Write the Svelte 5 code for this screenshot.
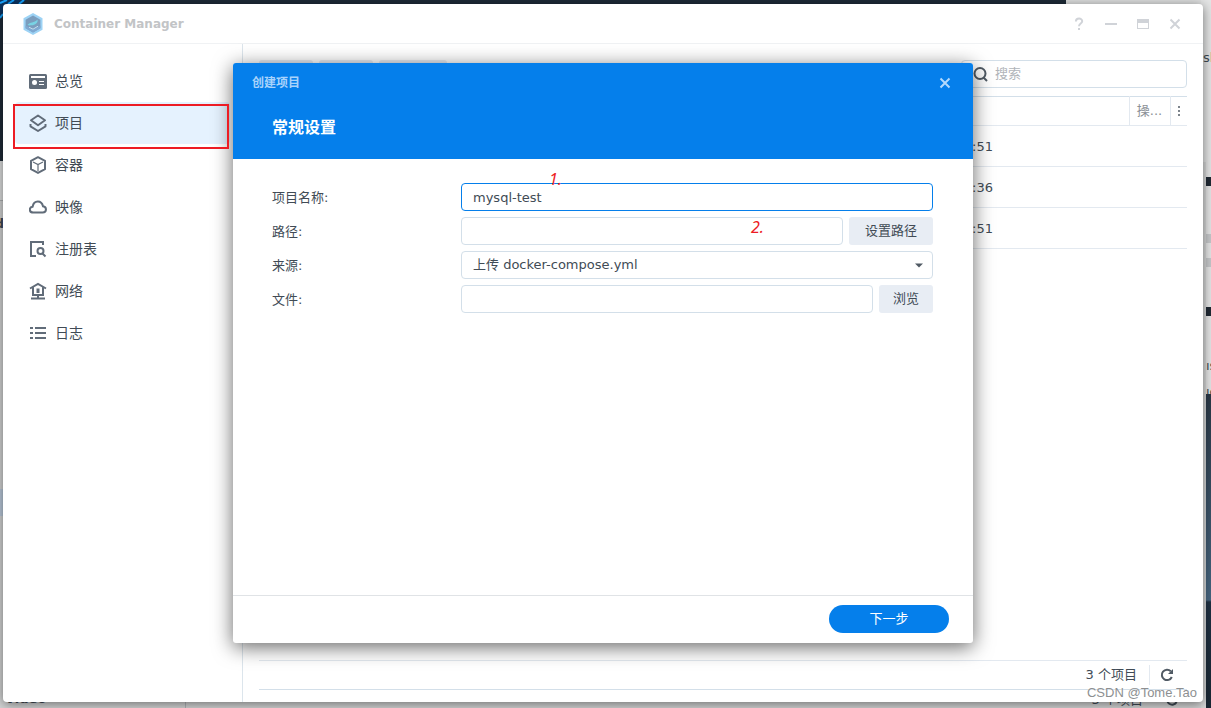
<script>
  const nav = [
    { id: 'overview', label: '总览' },
    { id: 'project', label: '项目' },
    { id: 'container', label: '容器' },
    { id: 'image', label: '映像' },
    { id: 'registry', label: '注册表' },
    { id: 'network', label: '网络' },
    { id: 'log', label: '日志' }
  ];
  const rows = [':51', ':36', ':51'];
  let name = $state('mysql-test');
  let path = $state('');
  let source = $state('上传 docker-compose.yml');
  let file = $state('');
</script>

<div class="desktop">
  <div class="wallpaper" aria-hidden="true">
    <svg class="corner" width="26" height="20" viewBox="0 0 26 20">
      <path d="M0 0H26L22 4L3 16L0 19Z" fill="#0b3563" />
      <path d="M0 3L7 0M0 18L3 14M8 4L14 0M19 4L24 0" stroke="#18a5ff" stroke-width="2" fill="none" />
    </svg>
    <div class="back-left"><span>d</span><i></i></div>
    <div class="back-bottom"><span class="clip-video">Video</span><i></i><span class="clip-count">3 个项目</span>
      <svg width="14" height="14" viewBox="0 0 14 14"><path d="M11.6 9A5 5 0 1 1 11 3.5" fill="none" stroke="#414b55" stroke-width="2" /><path d="M13 1V6H8Z" fill="#414b55" /></svg>
    </div>
    <div class="back-right">
      <span class="frag top">sl</span>
      <i class="band one"></i><i class="band two"></i><i class="band three"></i><i class="band four"></i>
      <span class="frag mid">ıs</span>
      <span class="frag low">ıc</span>
      <i class="edge"></i>
    </div>
  </div>

  <main class="window">
    <header class="titlebar">
      <svg class="logo" width="22" height="24" viewBox="0 0 22 24">
        <path d="M11 1L20.500 6.300V17.700L11 23L1.500 17.700V6.300Z" fill="#9dd3f5" />
        <path d="M11 3.500L18.400 7.700V16.300L11 20.500L3.600 16.300V7.700Z" fill="#7b9dbd" />
        <path d="M11 20.500L3.600 16.300V13.500L11 17.500L18.400 13.500V16.300Z" fill="#7fa9d2" />
        <path d="M5.500 13C8 9.500 12 11.500 15.500 7.500C16.500 10.500 13 13.200 9.500 13.300C8 13.400 6.500 13.500 5.500 13Z" fill="#79d3e4" />
        <path d="M7 15.200L11 17.200L16 14.200" fill="none" stroke="#c3dff0" stroke-width="1" />
      </svg>
      <h1>Container Manager</h1>
      <div class="win-controls">
        <button aria-label="帮助"><svg width="14" height="14" viewBox="0 0 14 14"><path d="M3.900 4.600C3.900 0.600 10.200 0.700 10.200 4.200C10.200 6.600 7 6.500 7 9.200M7 11V13" /></svg></button>
        <button aria-label="最小化"><svg width="14" height="14" viewBox="0 0 14 14"><path d="M1 7H13" /></svg></button>
        <button aria-label="最大化"><svg width="14" height="14" viewBox="0 0 14 14"><path d="M1 2H13V12H1ZM2 6V11H12V6Z" fill="#d0d3d8" fill-rule="evenodd" stroke="none" /></svg></button>
        <button aria-label="关闭"><svg width="14" height="14" viewBox="0 0 14 14"><path d="M2.500 2.500L11.500 11.500M11.500 2.500L2.500 11.500" /></svg></button>
      </div>
    </header>

    <div class="body">
      <nav>
        {#each nav as item (item.id)}
          <a href="#{item.id}" class:active={item.id === 'project'}>
            <svg width="18" height="18" viewBox="0 0 18 18" fill="none" stroke="#616c79" stroke-width="2">
              {#if item.id === 'overview'}
                <path d="M1.500 2H16.500Q18 2 18 3.500V15.500Q18 17 16.500 17H1.500Q0 17 0 15.500V3.500Q0 2 1.500 2Z" fill="#616c79" stroke="none" />
                <path d="M2 5H16" stroke="#fff" />
                <circle cx="5.500" cy="10.500" r="2.500" fill="#fff" stroke="none" />
                <path d="M10 9.500H15M10 12.500H15" stroke="#fff" stroke-width="1" />
              {:else if item.id === 'project'}
                <path d="M9 1.500L16 6.300L9 11.300L2 6.300Z" stroke-linejoin="round" />
                <path d="M1.500 10V12.300L9 17L16.500 12.300V10" stroke-linejoin="round" />
              {:else if item.id === 'container'}
                <path d="M9 1.200L16 4.800V13.200L9 16.900L2 13.200V4.800Z" stroke-linejoin="round" />
                <path d="M4 6L9 8.500L14 6M9 8.500V15" stroke-width="1.200" />
              {:else if item.id === 'image'}
                <path d="M4.300 14.500C-.200 14.500-.200 9.300 3.600 8.700C5 1.800 12.500 2 14 8.300C18 8.800 18 14.500 13.700 14.500Z" />
              {:else if item.id === 'registry'}
                <path d="M14 5V2H2V16H7" />
                <circle cx="11.500" cy="11" r="3" />
                <path d="M13.500 13.500L16.500 16.500" />
              {:else if item.id === 'network'}
                <path d="M1 6.500L9 2L17 6.500M4 5.500V13H14V5.500" />
                <path d="M2 16.500H16M9 13V16" />
                <path d="M9 6.500V11" stroke-width="3" />
              {:else}
                <path d="M1 4H4M1 9H4M1 14H4M6 4H17M6 9H17M6 14H17" />
              {/if}
            </svg>
            <span>{item.label}</span>
          </a>
        {/each}
        <div class="mark-box" aria-hidden="true"></div>
      </nav>

      <section class="content">
        <div class="toolbar">
          <i class="ghost"></i><i class="ghost"></i><i class="ghost wide"></i>
          <label class="search">
            <svg width="16" height="16" viewBox="0 0 16 16" fill="none" stroke="#505a64" stroke-width="2"><circle cx="8" cy="7.500" r="5.500" /><path d="M11.500 11.500L15 15" /></svg>
            <input type="search" placeholder="搜索" aria-label="搜索" />
          </label>
        </div>
        <table>
          <thead><tr><th></th><th class="op">操...</th><th class="more"><svg width="2" height="10" viewBox="0 0 2 10" role="img" aria-label="更多"><path d="M0 0H2V2H0ZM0 4H2V6H0ZM0 8H2V10H0Z" fill="#7d848c" /></svg></th></tr></thead>
          <tbody>
            {#each rows as row}
              <tr><td><span>{row}</span></td><td></td><td></td></tr>
            {/each}
          </tbody>
        </table>
        <footer class="pager">
          <span>3 个项目</span>
          <button aria-label="刷新"><svg width="14" height="14" viewBox="0 0 14 14"><path d="M11.800 9A5.200 5.200 0 1 1 10.800 3.300" fill="none" stroke="#505a64" stroke-width="2" /><path d="M13 1V6H8Z" fill="#505a64" /></svg></button>
        </footer>
      </section>
    </div>
  </main>

  <div class="dialog" role="dialog" aria-labelledby="dialog-title">
    <header>
      <div class="dialog-bar">
        <span id="dialog-title">创建项目</span>
        <button aria-label="关闭"><svg width="12" height="12" viewBox="0 0 12 12"><path d="M1.500 1.500L10.500 10.500M10.500 1.500L1.500 10.500" stroke="#b4d9fc" stroke-width="2" /></svg></button>
      </div>
      <h2>常规设置</h2>
    </header>
    <form>
      <div class="row">
        <label for="name">项目名称:</label>
        <div class="field"><input id="name" class="focused" bind:value={name} /><em class="mark first">1.</em></div>
      </div>
      <div class="row">
        <label for="path">路径:</label>
        <div class="field"><input id="path" bind:value={path} /><button type="button" class="pick">设置路径</button><em class="mark second">2.</em></div>
      </div>
      <div class="row">
        <label for="source">来源:</label>
        <div class="field">
          <select id="source" bind:value={source}><option>上传 docker-compose.yml</option></select>
          <svg class="caret" width="10" height="6" viewBox="0 0 10 6"><path d="M1 0.500H9L5 4.500Z" fill="#505a64" /></svg>
        </div>
      </div>
      <div class="row">
        <label for="file">文件:</label>
        <div class="field"><input id="file" bind:value={file} /><button type="button" class="browse">浏览</button></div>
      </div>
    </form>
    <footer><button class="next">下一步</button></footer>
  </div>

  <span class="watermark">CSDN @Tome.Tao</span>
</div>

<style>
  :global(body) { margin: 0; }
  .desktop, .desktop * { box-sizing: border-box; }
  .desktop {
    position: relative;
    height: 100vh;
    overflow: hidden;
    font: 13px/20px "DejaVu Sans", "Noto Sans CJK SC", sans-serif;
    color: #414b55;
    background: #dfe0e0;
  }
  button, input, select { font: inherit; color: inherit; margin: 0; }
  button { border: 0; padding: 0; background: none; cursor: pointer; }
  svg { display: block; flex: none; }

  .wallpaper {
    position: absolute;
    inset: 0;
    background: linear-gradient(#1f2b38, #1f2b38) 0 0 / 1066px 161px no-repeat, #dfe0e0;
  }
  .corner { position: absolute; left: 0; top: 0; }
  .back-left {
    position: absolute;
    left: 0;
    top: 200px;
    bottom: 0;
    width: 12px;
    border-top: 1px solid #b0b2b4;
    background: #d4d5d5;
  }
  .back-left span { position: absolute; right: 8px; top: 13px; font-weight: bold; }
  .back-left i { position: absolute; left: 0; top: 288px; width: 4px; height: 27px; background: #bccbdc; }
  .back-bottom {
    position: absolute;
    inset: auto 0 0 0;
    height: 20px;
    overflow: hidden;
    background: #d4d5d5;
  }
  .back-bottom i { position: absolute; left: 185px; top: 0; width: 1px; height: 20px; background: #b0b4b8; }
  .clip-video { position: absolute; left: 5px; top: 1px; font-weight: bold; }
  .clip-count { position: absolute; right: 68px; top: 2px; }
  .back-bottom svg { position: absolute; right: 32px; top: 5px; }
  .back-right {
    position: absolute;
    inset: 0 0 0 auto;
    width: 10px;
    overflow: hidden;
    background: linear-gradient(#e4e5e5 0 394px, #2a3846 394px, #46657f 600px, #1e3042 602px, #1a2834);
  }
  .edge { position: absolute; left: 0; top: 162px; bottom: 0; width: 5px; background: #d8d9d9; }
  .frag { position: absolute; left: 2px; }
  .frag.top { top: 48px; }
  .frag.mid { left: 5px; top: 356px; }
  .frag.low { left: 5px; top: 382px; height: 12px; overflow: hidden; }
  .band { position: absolute; left: 4px; right: 0; height: 9px; }
  .band.one { top: 177px; background: #1f2933; }
  .band.two { top: 234px; background: #c6c8ca; }
  .band.three { top: 258px; background: #c6c8ca; }
  .band.four { top: 307px; background: #1f2933; }

  .window {
    position: absolute;
    inset: 4px 8px 6px 3px;
    display: flex;
    flex-direction: column;
    border-radius: 4px;
    background: #fff;
    box-shadow: 0 2px 12px rgba(0, 0, 0, 0.5);
  }
  .titlebar {
    display: flex;
    align-items: center;
    height: 40px;
    padding: 0 21px 0 19px;
    border-bottom: 1px solid #f0f2f4;
  }
  h1 { flex: 1; margin: 0 0 0 10px; font-size: 12px; font-weight: bold; color: #c2c4c6; }
  .win-controls { display: flex; gap: 18px; }
  .win-controls svg { fill: none; stroke: #d0d3d8; stroke-width: 2; }
  .body { display: flex; flex: 1; min-height: 0; }

  nav {
    position: relative;
    display: flex;
    flex-direction: column;
    flex: none;
    width: 240px;
    padding: 16px 12px;
    border-right: 1px solid #dce5ec;
  }
  nav a {
    display: flex;
    align-items: center;
    gap: 8px;
    height: 42px;
    padding: 0 14px;
    border-radius: 4px;
    color: inherit;
    font-size: 14px;
    text-decoration: none;
  }
  nav a.active { background: #e5f2fe; }
  .mark-box {
    position: absolute;
    z-index: 2;
    left: 10px;
    top: 60px;
    width: 216px;
    height: 45px;
    border: 2px solid #ed1c24;
  }

  .content { display: flex; flex-direction: column; flex: 1; min-width: 0; padding: 16px 16px 12px; }
  .toolbar { display: flex; gap: 6px; height: 28px; margin-bottom: 8px; }
  .ghost { width: 54px; border-radius: 3px; background: #e8ecf2; }
  .ghost.wide { width: 68px; }
  .search {
    display: flex;
    align-items: center;
    gap: 7px;
    width: 226px;
    margin-left: auto;
    padding: 0 10px;
    border: 1px solid #d3dfe9;
    border-radius: 4px;
  }
  .search input { flex: 1; min-width: 0; padding: 0; border: 0; outline: 0; background: none; }
  .search input::placeholder { color: #b0b4b9; opacity: 1; }

  table { width: 100%; border-collapse: collapse; border-top: 1px solid #d3dfe9; table-layout: fixed; }
  th { height: 29px; padding: 0; font-weight: normal; color: #8b9096; border-bottom: 1px solid #e3e9f0; }
  th.op { width: 41px; border-left: 1px solid #e3e9f0; }
  th.more { width: 17px; border-left: 1px solid #e3e9f0; }
  th.more svg { margin: 0 auto; }
  td { height: 41px; padding: 2px 0 0; border-bottom: 1px solid #e3e9f0; }
  td span { display: block; margin-right: 136px; text-align: right; }

  .pager {
    display: flex;
    align-items: center;
    justify-content: flex-end;
    height: 30px;
    margin-top: auto;
    border-top: 1px solid #e3e9f0;
    border-bottom: 1px solid #d3dfe9;
  }
  .pager button { height: 20px; margin-left: 12px; padding: 0 13px 0 10px; border-left: 1px solid #e3e9f0; }

  .dialog {
    position: absolute;
    inset: 63px 238px 65px 233px;
    display: flex;
    flex-direction: column;
    border-radius: 3px;
    background: #fff;
    box-shadow: 0 4px 20px rgba(0, 0, 0, 0.6);
  }
  .dialog header { height: 96px; border-radius: 3px 3px 0 0; background: #057feb; color: #fff; }
  .dialog-bar {
    display: flex;
    align-items: center;
    justify-content: space-between;
    height: 40px;
    padding: 0 22px 0 19px;
    font-size: 12px;
    font-weight: bold;
    color: #a9d3fb;
  }
  h2 { margin: 13px 0 0 39px; font-size: 16px; line-height: 24px; font-weight: bold; }
  form { display: flex; flex-direction: column; gap: 6px; flex: 1; padding: 24px 40px 24px 39px; }
  .row { display: grid; grid-template-columns: 189px 1fr; align-items: center; }
  .row label { padding-top: 1px; }
  .field { position: relative; display: flex; gap: 6px; }
  .field input, .field select {
    flex: 1;
    min-width: 0;
    height: 28px;
    padding: 0 11px;
    border: 1px solid #d3dfe9;
    border-radius: 4px;
    outline: 0;
    background: #fff;
    appearance: none;
  }
  .field input.focused { border-color: #057feb; }
  .field button { height: 28px; border-radius: 3px; background: #e8edf4; }
  .pick { width: 84px; }
  .browse { width: 54px; }
  .caret { position: absolute; right: 9px; top: 12px; pointer-events: none; }
  .mark { position: absolute; font: italic 16px/20px "Noto Sans", sans-serif; color: #ed1c24; }
  .mark.first { left: 88px; top: -14px; }
  .mark.second { left: 290px; top: 0; }
  .dialog footer {
    display: flex;
    align-items: center;
    justify-content: flex-end;
    height: 48px;
    padding: 0 24px 2px;
    border-top: 1px solid #e0e3e6;
  }
  .next { width: 120px; height: 28px; border-radius: 14px; background: #057feb; color: #fff; }

  .watermark {
    position: absolute;
    right: 14px;
    bottom: 5px;
    font: 13px/20px "Liberation Sans", sans-serif;
    color: #8d8f91;
    text-shadow: 0 0 1px #fff;
  }
</style>
